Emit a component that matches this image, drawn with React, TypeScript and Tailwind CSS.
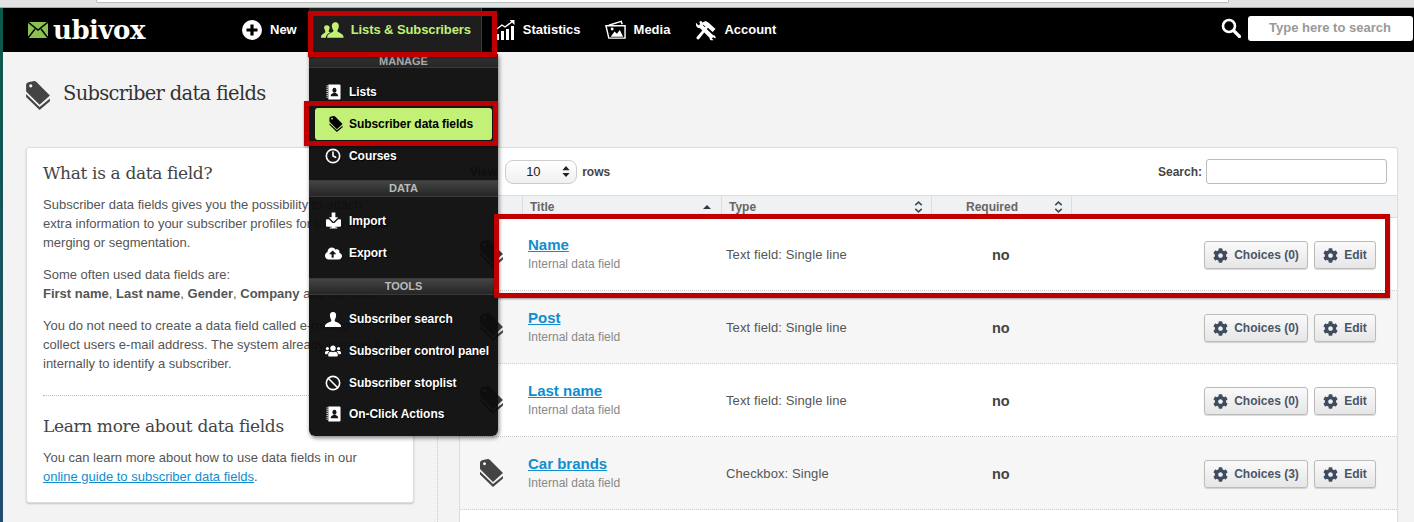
import { Ban, Clock } from 'lucide-react';
import { FaCog, FaCloudUploadAlt, FaUsers } from 'react-icons/fa';

const sans = "font-['Liberation_Sans',Arial,sans-serif]";
const slab = "font-['DejaVu_Serif',serif]";

function TagsIcon({ className }: { className?: string }) {
  return (
    <svg viewBox="0 0 23 28" className={className} fill="currentColor">
      <path d="M0 12.5 L13 25 L23 17 V19.5 L13 28 L0 15.5 Z" />
      <path fillRule="evenodd" d="M3 1 L8 0 Q9 0 10 1 L23 14 L13 23 L0.5 10.5 Q0 10 0 9 V4 Q0 1.5 3 1 Z M4.5 3.2 a1.5 1.5 0 1 0 0.01 0 Z" />
    </svg>
  );
}

function BookIcon({ className }: { className?: string }) {
  return (
    <svg viewBox="0 0 16 17" className={className} fill="white">
      <path fillRule="evenodd" d="M2.5 0.5 H14.5 Q15.5 0.5 15.5 1.5 V15.5 Q15.5 16.5 14.5 16.5 H2.5 Z M9 4 a2.2 2.6 0 1 0 0.01 0 Z M5 13 H13 C13 10.5 11.5 10 10.3 9.5 H7.7 C6.5 10 5 10.5 5 13 Z" />
      <path d="M0.5 2 H2 M0.5 4 H2 M0.5 6 H2 M0.5 8 H2 M0.5 10 H2 M0.5 12 H2 M0.5 14 H2" stroke="white" strokeWidth="1" />
    </svg>
  );
}

function ImportIcon({ className }: { className?: string }) {
  return (
    <svg viewBox="0 0 16 18" className={className} fill="white">
      <path d="M6 0 H10 V5 H13 L8 10 L3 5 H6 Z" />
      <path d="M1 7 H3 L7 11 H9 L13 7 H15 Q16 7 16 8 V14 Q16 15 15 15 H10 V16 H12 V17 H4 V16 H6 V15 H1 Q0 15 0 14 V8 Q0 7 1 7 Z" />
    </svg>
  );
}

function BustIcon({ className }: { className?: string }) {
  return (
    <svg viewBox="0 0 16 15" className={className} fill="white">
      <path d="M8 0 C10.5 0 11.5 2 11 4.5 C10.7 6.5 9.7 7.5 9.7 8.7 C9.7 10 15 10.5 16 13.5 V15 H0 V13.5 C1 10.5 6.3 10 6.3 8.7 C6.3 7.5 5.3 6.5 5 4.5 C4.5 2 5.5 0 8 0 Z" />
    </svg>
  );
}

function SortArrows() {
  return (
    <svg viewBox="0 0 9 13" className="h-[12px] w-[9px] text-[#3c4858]" fill="none" stroke="currentColor" strokeWidth="1.6">
      <path d="M1 4.5 L4.5 1.2 L8 4.5 M1 8.5 L4.5 11.8 L8 8.5" />
    </svg>
  );
}

function NavItem({ icon, label }: { icon: React.ReactNode; label: string }) {
  return (
    <div className="flex items-center gap-[8px] text-[13px] font-bold text-white">
      {icon}
      <span>{label}</span>
    </div>
  );
}

function MenuHeader({ label }: { label: string }) {
  return (
    <div className="flex h-[17px] items-center justify-center border-y border-[#3a3a3a] bg-gradient-to-b from-[#444] to-[#262626] text-[11px] font-bold text-[#bbb]">
      {label}
    </div>
  );
}

function MenuItem({ icon, label, rowClass }: { icon: React.ReactNode; label: string; rowClass: string }) {
  return (
    <div className={`flex items-center text-[12px] font-bold tracking-[-0.06px] text-white [text-shadow:1px_1px_1px_#000] ${rowClass}`}>
      <span className="flex w-[40px] justify-center pl-[8px]">{icon}</span>
      <span>{label}</span>
    </div>
  );
}

function DropdownMenu() {
  return (
    <div className={`absolute left-[309px] top-[54px] z-10 h-[382px] w-[189px] rounded-b-md bg-[#0c0c0c]/[0.96] shadow-[1px_2px_4px_rgba(0,0,0,0.5)] ${sans}`}>
      <div className="flex h-[14px] items-center justify-center border-b border-[#3a3a3a] bg-gradient-to-b from-[#333] to-[#262626] pt-[1px] text-[11px] font-bold text-[#aaa]">
        MANAGE
      </div>
      <MenuItem rowClass="mt-[8px] h-[32px]" label="Lists" icon={<BookIcon className="h-[16px] w-[15px]" />} />
      <div className="mx-[6px] flex h-[32px] items-center rounded-[3px] bg-[#c3f076] text-[12px] font-bold tracking-[-0.06px] text-black">
        <span className="flex w-[34px] justify-center pl-[8px]">
          <TagsIcon className="h-[16px] w-[14px] text-black" />
        </span>
        <span>Subscriber data fields</span>
      </div>
      <MenuItem rowClass="h-[32px]" label="Courses" icon={<Clock size={16} strokeWidth={2.4} />} />
      <div className="mt-[8px]">
        <MenuHeader label="DATA" />
      </div>
      <MenuItem rowClass="mt-[8px] h-[32px]" label="Import" icon={<ImportIcon className="h-[18px] w-[15px]" />} />
      <MenuItem rowClass="h-[32px]" label="Export" icon={<FaCloudUploadAlt size={17} />} />
      <div className="mt-[9px]">
        <MenuHeader label="TOOLS" />
      </div>
      <MenuItem rowClass="mt-[8px] h-[32px]" label="Subscriber search" icon={<BustIcon className="h-[15px] w-[16px]" />} />
      <MenuItem rowClass="h-[32px]" label="Subscriber control panel" icon={<FaUsers size={16} />} />
      <MenuItem rowClass="h-[32px]" label="Subscriber stoplist" icon={<Ban size={16} strokeWidth={2.4} />} />
      <MenuItem rowClass="h-[30px]" label="On-Click Actions" icon={<BookIcon className="h-[16px] w-[15px]" />} />
    </div>
  );
}

function TopNav() {
  return (
    <div className={`flex h-[44px] items-center bg-black ${sans}`}>
      <div className="ml-[25px] flex w-[214px] items-center gap-[5px]">
        <svg viewBox="0 0 20 16" className="h-[16px] w-[20px]">
          <rect width="20" height="16" fill="#8cc152" />
          <path d="M0 0 L10 8 L20 0 M0 16 L7 7 M20 16 L13 7" fill="none" stroke="#000" strokeWidth="1.4" />
        </svg>
        <span className={`text-[26px] font-bold leading-none tracking-[-0.5px] text-white ${slab}`}>ubivox</span>
      </div>
      <NavItem
        label="New"
        icon={
          <svg viewBox="0 0 20 20" className="h-[20px] w-[20px]">
            <circle cx="10" cy="10" r="10" fill="white" />
            <path d="M10 4.5 V15.5 M4.5 10 H15.5" stroke="black" strokeWidth="3.2" />
          </svg>
        }
      />
      <div className="ml-[12px] flex h-full w-[173px] items-center gap-[7px] border-r border-[#3a3a3a] bg-[#1e1e1e] pl-[12px] text-[13px] font-bold tracking-[-0.1px] text-[#c3f076]">
        <svg viewBox="0 0 24 16" className="h-[16px] w-[23px]" fill="#c3f076">
          <path d="M15 0 C18 0 19 2.5 18.5 5 C18.2 7 17 8 17 9 C17 10.5 23 11 23.5 15 L23.5 16 H6.5 V15 C7 11 13 10.5 13 9 C13 8 11.8 7 11.5 5 C11 2.5 12 0 15 0 Z" />
          <path d="M6 3 C8 3 9 4 9 5.5 C9 7.5 8 8.5 8 9.5 C8.5 10 9 10.2 10 10.5 C7 11.5 5.5 13 5 16 H0 V15 C0.5 12 4.5 11.5 4.5 9.5 C4.5 8.5 3.5 7.5 3.3 6 C3 4 4 3 6 3 Z" />
        </svg>
        <span>Lists &amp; Subscribers</span>
      </div>
      <div className="ml-[13px]">
        <NavItem
          label="Statistics"
          icon={
            <svg viewBox="0 0 20 20" className="h-[20px] w-[20px]" fill="white">
              <path d="M1 14 H4 V20 H1 Z M6 11 H9 V20 H6 Z M11 9 H14 V20 H11 Z M16 6 H19 V20 H16 Z" />
              <path d="M0.5 10 L7 5 L10 7 L18 1" fill="none" stroke="white" strokeWidth="1.4" />
              <path d="M14.5 0 H19.5 V5 Z" />
            </svg>
          }
        />
      </div>
      <div className="ml-[24px]">
        <NavItem
          label="Media"
          icon={
            <svg viewBox="0 0 22 20" className="h-[20px] w-[21px]" fill="none" stroke="white" strokeWidth="1.5">
              <path d="M4 5 L17 1 L18 4" />
              <path d="M1 5.5 H21 V18.5 H4 Z" />
              <path d="M6 17 L10 11.5 L12.5 14 L15.5 10 L19 17 Z" fill="white" stroke="none" />
              <circle cx="7.5" cy="9" r="1.5" fill="white" stroke="none" />
            </svg>
          }
        />
      </div>
      <div className="ml-[25px]">
        <NavItem
          label="Account"
          icon={
            <svg viewBox="0 0 22 21" className="h-[21px] w-[21px]" fill="white">
              <path d="M8 2 L11 0.5 L14 2 L21.5 9 L18.5 12 L13.5 7.5 L5 18.5 Q3.5 20.5 2 19.5 Q0.5 18 2.5 16.5 L11 6.5 L8.5 4.5 Z" />
              <path fillRule="evenodd" d="M1 2.5 L3.5 5 L5.5 4 L4.5 1.5 L6 0.5 C8 1 8.8 3 8.2 5 L19 15.5 C21 15.3 22 17 21.5 19 L19 17.5 L17.5 19 L19.5 20.5 C17 21.5 15 20 15.2 18 L5 8 C3 8.5 0.5 6.5 1 2.5 Z" />
            </svg>
          }
        />
      </div>
      <div className="mb-[4px] ml-auto flex items-center gap-[7px] pr-[1px]">
        <svg viewBox="0 0 20 20" className="h-[20px] w-[20px]" fill="none" stroke="white">
          <circle cx="8" cy="8" r="6" strokeWidth="2.6" />
          <path d="M12.5 12.5 L18.5 18.5" strokeWidth="3.2" strokeLinecap="round" />
        </svg>
        <div className="flex h-[25px] w-[165px] items-center rounded-[3px] bg-white pl-[21px] text-[13px] font-bold text-[#999]">
          Type here to search
        </div>
      </div>
    </div>
  );
}

function InfoCard() {
  return (
    <div className={`h-[356px] w-[388px] whitespace-nowrap rounded-[3px] border border-[#ddd] bg-white px-[16px] pt-[13px] text-[13px] leading-[19px] text-[#555] shadow-[0_1px_2px_rgba(0,0,0,0.2)] ${sans}`}>
      <h2 className={`text-[17px] leading-[24px] tracking-[-0.35px] text-[#444] ${slab}`}>What is a data field?</h2>
      <p className="mt-[10px]">
        Subscriber data fields gives you the possibility to attach
        <br />
        extra information to your subscriber profiles for use in e-mail
        <br />
        merging or segmentation.
      </p>
      <p className="mt-[13px]">
        Some often used data fields are:
        <br />
        <b>First name</b>, <b>Last name</b>, <b>Gender</b>, <b>Company</b> and zip code.
      </p>
      <p className="mt-[13px]">
        You do not need to create a data field called e-mail to
        <br />
        collect users e-mail address. The system already creates it
        <br />
        internally to identify a subscriber.
      </p>
      <div className="mt-[22px] border-t border-dotted border-[#bbb]" />
      <h2 className={`mt-[18px] text-[17px] leading-[24px] tracking-[-0.35px] text-[#444] ${slab}`}>Learn more about data fields</h2>
      <p className="mt-[10px]">
        You can learn more about how to use data fields in our
        <br />
        <a className="text-[#0f8ed0] underline">online guide to subscriber data fields</a>.
      </p>
    </div>
  );
}

const rows = [
  { name: 'Name', type: 'Text field: Single line', choices: 0, bg: 'bg-white' },
  { name: 'Post', type: 'Text field: Single line', choices: 0, bg: 'bg-[#f6f6f6]' },
  { name: 'Last name', type: 'Text field: Single line', choices: 0, bg: 'bg-white' },
  { name: 'Car brands', type: 'Checkbox: Single', choices: 3, bg: 'bg-[#f6f6f6]' },
];

const colClass = 'grid grid-cols-[62px_199px_210px_141px_1fr]';

function RowButton({ label, className }: { label: string; className: string }) {
  return (
    <div className={`flex h-[28px] items-center justify-center gap-[6px] rounded-[3px] border border-[#bbb] bg-gradient-to-b from-[#fafafa] to-[#e6e6e6] text-[12px] font-bold text-[#4a5568] shadow-[0_1px_1px_rgba(0,0,0,0.15)] ${className}`}>
      <FaCog size={15} className="text-[#3f4c5f]" />
      <span>{label}</span>
    </div>
  );
}

function FieldsTable() {
  return (
    <div className={`w-[939px] flex-1 rounded-t-[3px] border border-b-0 border-[#ddd] bg-white ${sans}`}>
      <div className="flex h-[47px] items-center justify-between pl-[10px] pr-[10px] text-[12px] font-bold text-[#444]">
        <div className="flex items-center">
          <span>View</span>
          <div className="ml-[8px] flex h-[24px] w-[72px] items-center rounded-[8px] border border-[#ccc] bg-gradient-to-b from-white to-[#f0f0f0] pl-[20px] text-[13px] font-normal text-[#222]">
            <span>10</span>
            <svg viewBox="0 0 8 12" className="ml-auto mr-[6px] h-[11px] w-[8px]" fill="#222">
              <path d="M4 0 L8 4.5 H0 Z M4 12 L0 7.5 H8 Z" />
            </svg>
          </div>
          <span className="ml-[5px]">rows</span>
        </div>
        <div className="flex items-center gap-[4px]">
          <span>Search:</span>
          <div className="h-[25px] w-[181px] rounded-[3px] border border-[#bbb] bg-white" />
        </div>
      </div>
      <div className={`${colClass} h-[23px] border-y border-[#ddd] bg-[#f0f1f3] text-[12px] font-bold text-[#666]`}>
        <div />
        <div className="flex items-center justify-between border-l border-[#ddd] pl-[7px] pr-[10px]">
          <span>Title</span>
          <svg viewBox="0 0 8 4" className="h-[4px] w-[8px]" fill="#2c3a4c">
            <path d="M4 0 L8 4 H0 Z" />
          </svg>
        </div>
        <div className="flex items-center justify-between border-l border-[#ddd] pl-[7px] pr-[8px]">
          <span>Type</span>
          <SortArrows />
        </div>
        <div className="flex items-center justify-between border-x border-[#ddd] pl-[34px] pr-[8px]">
          <span>Required</span>
          <SortArrows />
        </div>
        <div />
      </div>
      {rows.map((row) => (
        <div key={row.name} className={`${colClass} h-[73px] items-center border-b border-dotted border-[#ccc] ${row.bg}`}>
          <div className="flex justify-center pl-[1px]">
            <TagsIcon className="h-[28px] w-[23px] text-[#444]" />
          </div>
          <div className="pl-[6px]">
            <a className="block text-[15px] font-bold leading-[18px] text-[#0f8ed0] underline">{row.name}</a>
            <span className="mt-[3px] block text-[12px] leading-[15px] text-[#888]">Internal data field</span>
          </div>
          <div className="pl-[5px] pt-[2px] text-[13px] tracking-[0.1px] text-[#555]">{row.type}</div>
          <div className="pl-[61px] pt-[3px] text-[14.5px] font-bold text-[#444]">no</div>
          <div className="flex justify-end gap-[6px] pr-[21px] pt-[2px]">
            <RowButton label={`Choices (${row.choices})`} className="w-[104px]" />
            <RowButton label="Edit" className="w-[62px]" />
          </div>
        </div>
      ))}
    </div>
  );
}

function RedBox({ className }: { className: string }) {
  return <div className={`absolute z-20 border-[5px] border-[#c00000] shadow-[0_1px_2px_rgba(0,0,0,0.4)] ${className}`} />;
}

export default function App() {
  return (
    <div className="relative h-[522px] w-[1414px] overflow-hidden bg-[#f3f3f3]">
      <div className="relative h-[8px] border-b border-[#aaa] bg-[#e2e2e2]">
        <div className="ml-[96px] h-[3px] w-[1133px] rounded-b-[2px] border border-t-0 border-[#bbb] bg-white" />
      </div>
      <div className="flex h-[514px]">
        <div className="w-[3px] bg-gradient-to-b from-[#0a5a4a] to-[#234d70]" />
        <div className="flex min-w-0 flex-1 flex-col">
          <TopNav />
          <div className="flex h-[95px] items-start pl-[23px] pt-[29px]">
            <TagsIcon className="h-[29px] w-[24px] text-[#444]" />
            <h1 className={`ml-[13px] text-[19.5px] leading-[26px] tracking-[-0.7px] text-[#333] ${slab}`}>Subscriber data fields</h1>
          </div>
          <div className="flex min-h-0 flex-1">
            <div className="w-[435px] border-r border-dotted border-[#ccc] pl-[23px]">
              <InfoCard />
            </div>
            <div className="ml-[21px] flex">
              <FieldsTable />
            </div>
          </div>
        </div>
      </div>
      <DropdownMenu />
      <RedBox className="left-[308px] top-[11px] h-[46px] w-[189px]" />
      <RedBox className="left-[304px] top-[101px] h-[45px] w-[194px]" />
      <RedBox className="left-[494px] top-[214px] h-[84px] w-[896px]" />
    </div>
  );
}
